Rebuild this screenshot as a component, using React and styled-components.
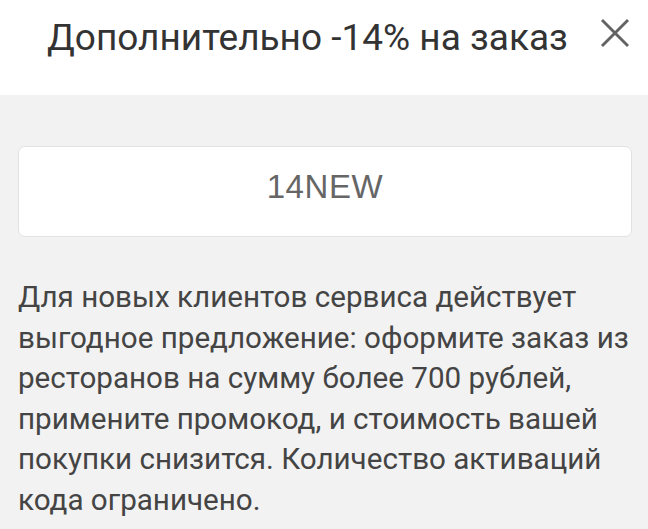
import React from 'react'
import styled, { createGlobalStyle } from 'styled-components'

const GlobalStyle = createGlobalStyle`
  html, body {
    margin: 0;
    padding: 0;
    background: #f2f2f2;
  }
  body {
    font-family: Roboto, "Noto Sans", sans-serif;
  }
`

const Sheet = styled.div`
  width: 648px;
  min-height: 529px;
  background: #f2f2f2;
  display: flex;
  flex-direction: column;
`

const Header = styled.div`
  height: 95px;
  background: #ffffff;
  display: flex;
  align-items: center;
  padding: 0 18px 0 47px;
  box-sizing: border-box;
`

const Title = styled.h1`
  flex: 1;
  margin: 0;
  font-size: 37px;
  font-weight: 400;
  color: #333333;
  line-height: 1;
  padding-bottom: 20px;
`

const CloseButton = styled.button`
  width: 30px;
  height: 30px;
  padding: 0;
  border: none;
  background: none;
  display: flex;
  align-items: center;
  justify-content: center;
  margin-bottom: 29px;
`

const Body = styled.div`
  padding: 51px 16px 0 18px;
  display: flex;
  flex-direction: column;
  gap: 40px;
`

const CodeBox = styled.div`
  height: 91px;
  box-sizing: border-box;
  padding-bottom: 9px;
  background: #ffffff;
  border: 1.5px solid #e2e2e2;
  border-radius: 7px;
  display: flex;
  align-items: center;
  justify-content: center;
  font-family: "Liberation Sans", Arial, sans-serif;
  font-size: 33px;
  color: #666666;
  letter-spacing: 0.6px;
`

const Description = styled.p`
  margin: 0;
  margin-right: -4px;
  font-size: 29.6px;
  line-height: 40.5px;
  color: #444444;
`

const App = () => {
  return (
    <>
      <GlobalStyle />
      <Sheet>
        <Header>
          <Title>Дополнительно -14% на заказ</Title>
          <CloseButton aria-label="Закрыть">
            <svg width="30" height="30" viewBox="0 0 30 30">
              <path d="M2 2 L28 28 M28 2 L2 28" stroke="#636363" strokeWidth="2.9" fill="none" />
            </svg>
          </CloseButton>
        </Header>
        <Body>
          <CodeBox>14NEW</CodeBox>
          <Description>
            Для новых клиентов сервиса действует выгодное предложение: оформите заказ из ресторанов на сумму более 700 рублей, примените промокод, и стоимость вашей покупки снизится. Количество активаций кода ограничено.
          </Description>
        </Body>
      </Sheet>
    </>
  )
}

export default App
